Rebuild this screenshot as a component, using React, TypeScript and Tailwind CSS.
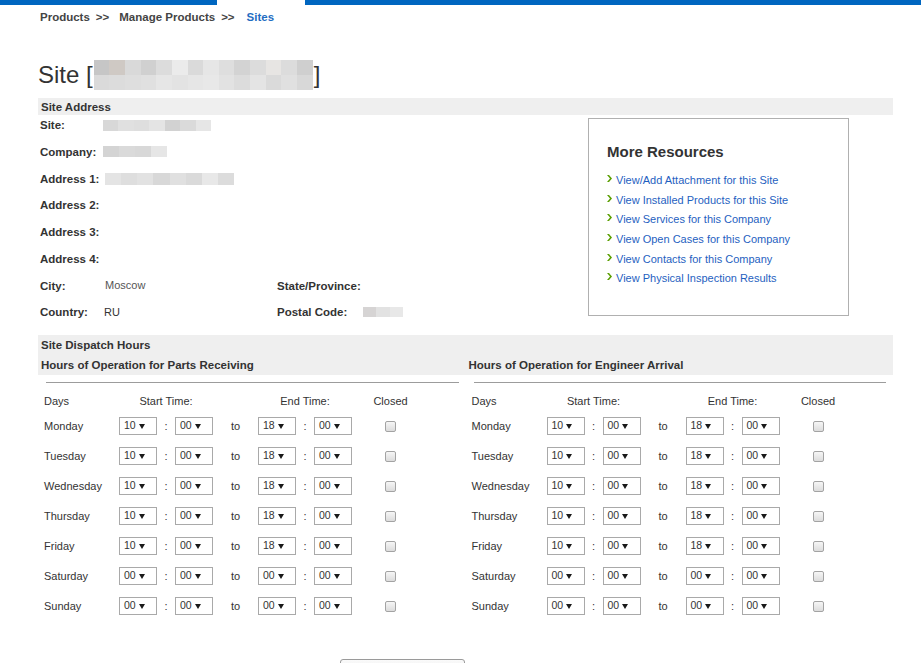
import React from "react";

const TITLE_TOP = ["bg-[#c6c6c6]", "bg-[#cfc9c4]", "bg-[#d9d9d9]", "bg-[#d0d0d0]", "bg-[#dcdcdc]", "bg-[#ebebeb]", "bg-[#dadada]", "bg-[#e6e6e6]", "bg-[#dedede]", "bg-[#d3d3d3]", "bg-[#dcdcdc]", "bg-[#e7e5e3]", "bg-[#dcdcdc]", "bg-[#cfcfcf]"];
const TITLE_BOTTOM = ["bg-[#dadada]", "bg-[#dcdcdc]", "bg-[#dedede]", "bg-[#e0e0e0]", "bg-[#e6e6e6]", "bg-[#e3e3e3]", "bg-[#e6e6e6]", "bg-[#e8e8e8]", "bg-[#e2e2e2]", "bg-[#dcdcdc]", "bg-[#e4e4e4]", "bg-[#dadada]", "bg-[#e0e0e0]", "bg-[#d8d8d8]"];
const SITE_BLUR = ["bg-[#d8d8d8]", "bg-[#e0e0e0]", "bg-[#dedede]", "bg-[#e4e4e4]", "bg-[#d2d2d2]", "bg-[#dadada]", "bg-[#e6e6e6]"];
const COMPANY_BLUR = ["bg-[#d4d4d4]", "bg-[#dadada]", "bg-[#d8d8d8]", "bg-[#e6e6e6]"];
const ADDR_BLUR = ["bg-[#e4e4e4]", "bg-[#dedede]", "bg-[#e2e2e2]", "bg-[#d8d8d8]", "bg-[#e0e0e0]", "bg-[#dadada]", "bg-[#e8e8e8]", "bg-[#dcdcdc]"];
const POSTAL_BLUR = ["bg-[#d6d4d4]", "bg-[#e2e2e2]", "bg-[#e8e8e8]"];

const LINKS = [
  "View/Add Attachment for this Site",
  "View Installed Products for this Site",
  "View Services for this Company",
  "View Open Cases for this Company",
  "View Contacts for this Company",
  "View Physical Inspection Results",
];

const HOURS = [
  { day: "Monday", start: "10", end: "18" },
  { day: "Tuesday", start: "10", end: "18" },
  { day: "Wednesday", start: "10", end: "18" },
  { day: "Thursday", start: "10", end: "18" },
  { day: "Friday", start: "10", end: "18" },
  { day: "Saturday", start: "00", end: "00" },
  { day: "Sunday", start: "00", end: "00" },
];

function Blur({ cells, className }: { cells: string[]; className: string }) {
  return (
    <div className={`flex ${className}`}>
      {cells.map((c, i) => (
        <div key={i} className={`flex-1 ${c}`} />
      ))}
    </div>
  );
}

function AddrRow({ label, value, label2, value2 }: { label: string; value?: React.ReactNode; label2?: string; value2?: React.ReactNode }) {
  return (
    <div className="flex items-start h-[26.75px]">
      <div className="w-[63px] font-bold text-[11.5px] leading-[20px]">{label}</div>
      <div className="w-[174px] h-[20px] flex items-center text-[11px]">{value}</div>
      {label2 && <div className="w-[86px] font-bold text-[11.5px] leading-[20px]">{label2}</div>}
      {value2 && <div className="h-[20px] flex items-center">{value2}</div>}
    </div>
  );
}

function Select({ value }: { value: string }) {
  return (
    <div className="w-[38px] h-[18px] border border-[#a9a9a9] bg-white flex items-center pl-[4px] text-[10.5px] text-[#333]">
      <span>{value}</span>
      <svg width="6" height="5" viewBox="0 0 6 5" className="ml-[3px]">
        <polygon points="0,0 6,0 3,5" fill="#1a1a1a" />
      </svg>
    </div>
  );
}

function Checkbox() {
  return <div className="w-[11px] h-[11px] border border-[#a3a3a3] rounded-[2px] bg-linear-to-b from-[#f6f6f6] to-[#dcdcdc]" />;
}

function HoursTable() {
  return (
    <div>
      <div className="mt-[7px] ml-[8px] mr-[7px] border-t border-[#9c9c9c]" />
      <div className="mt-[8px] h-[20px] flex items-center pl-[6px] text-[11px]">
        <div className="w-[75px]">Days</div>
        <div className="w-[94px] text-center">Start Time:</div>
        <div className="w-[45px]" />
        <div className="w-[94px] text-center">End Time:</div>
        <div className="w-[77px] text-center">Closed</div>
      </div>
      {HOURS.map(h => (
        <div key={h.day} className="h-[30px] flex items-center pl-[6px] text-[11px]">
          <div className="w-[75px]">{h.day}</div>
          <Select value={h.start} />
          <div className="w-[18px] text-center">:</div>
          <Select value="00" />
          <div className="w-[45px] text-center">to</div>
          <Select value={h.end} />
          <div className="w-[18px] text-center">:</div>
          <Select value="00" />
          <div className="w-[77px] flex justify-center">
            <Checkbox />
          </div>
        </div>
      ))}
    </div>
  );
}

export default function App() {
  return (
    <div className="w-[921px] min-h-[663px] bg-white text-[#333] font-['Liberation_Sans',Arial,sans-serif]">
      {/* top bar */}
      <div className="flex h-[5px]">
        <div className="w-[217px] bg-[#0066c0]" />
        <div className="w-[88px]" />
        <div className="flex-1 bg-[#0066c0]" />
      </div>

      <div className="pl-[38px] w-[893px]">
        {/* breadcrumb */}
        <div className="mt-[6px] h-[14px] flex items-center pl-[2px] text-[11.5px] font-bold text-[#444]">
          <span>Products</span>
          <span className="ml-[6px]">&gt;&gt;</span>
          <span className="ml-[10px]">Manage Products</span>
          <span className="ml-[6px]">&gt;&gt;</span>
          <span className="ml-[12px] text-[#1f6dc2]">Sites</span>
        </div>

        {/* title */}
        <div className="mt-[35px] h-[30px] flex items-center text-[24px] leading-[28px] text-[#333]">
          <span>Site [</span>
          <div className="w-[219px] h-[30px] ml-[1px] flex flex-col">
            <Blur cells={TITLE_TOP} className="flex-1" />
            <Blur cells={TITLE_BOTTOM} className="flex-1" />
          </div>
          <span className="ml-[1px]">]</span>
        </div>

        {/* site address */}
        <div className="mt-[8px] h-[17px] bg-[#efefef] pl-[3px] text-[11.5px] font-bold leading-[18px]">Site Address</div>
        <div className="flex">
          <div className="flex-1 pl-[2px]">
            <AddrRow label="Site:" value={<Blur cells={SITE_BLUR} className="w-[108px] h-[11px]" />} />
            <AddrRow label="Company:" value={<Blur cells={COMPANY_BLUR} className="w-[64px] h-[11px]" />} />
            <AddrRow label="Address 1:" value={<Blur cells={ADDR_BLUR} className="ml-[2px] w-[129px] h-[12px]" />} />
            <AddrRow label="Address 2:" />
            <AddrRow label="Address 3:" />
            <AddrRow label="Address 4:" />
            <AddrRow label="City:" value={<span className="ml-[2px] text-[#555]">Moscow</span>} label2="State/Province:" />
            <AddrRow
              label="Country:"
              value={<span className="ml-[1px]">RU</span>}
              label2="Postal Code:"
              value2={<Blur cells={POSTAL_BLUR} className="w-[40px] h-[10px]" />}
            />
          </div>
          <div className="mt-[3px] mr-[44px] w-[261px] h-[198px] border border-[#b0b0b0] pl-[18px] pt-[24px]">
            <div className="text-[15px] font-bold leading-[18px] text-[#333]">More Resources</div>
            <div className="mt-[10px]">
              {LINKS.map(l => (
                <div key={l} className="flex items-start h-[19.7px]">
                  <svg width="5" height="7" viewBox="0 0 5 7" className="mt-[4px] shrink-0">
                    <path d="M0 0 L2 0 L5 3.5 L2 7 L0 7 L3 3.5 Z" fill="#5a9e00" />
                  </svg>
                  <span className="ml-[4px] text-[11px] leading-[19.7px] text-[#1f5fbf]">{l}</span>
                </div>
              ))}
            </div>
          </div>
        </div>

        {/* dispatch hours */}
        <div className="mt-[6px] bg-[#efefef] text-[11.5px] font-bold leading-[20px]">
          <div className="pl-[3px]">Site Dispatch Hours</div>
          <div className="grid grid-cols-2">
            <div className="pl-[3px]">Hours of Operation for Parts Receiving</div>
            <div className="pl-[3px]">Hours of Operation for Engineer Arrival</div>
          </div>
        </div>
        <div className="grid grid-cols-2">
          <HoursTable />
          <HoursTable />
        </div>

        <div className="mt-[38px] ml-[302px] w-[125px] h-[24px] border border-[#9a9a9a] rounded-[3px] bg-linear-to-b from-[#fafafa] to-[#e2e2e2]" />
      </div>
    </div>
  );
}
